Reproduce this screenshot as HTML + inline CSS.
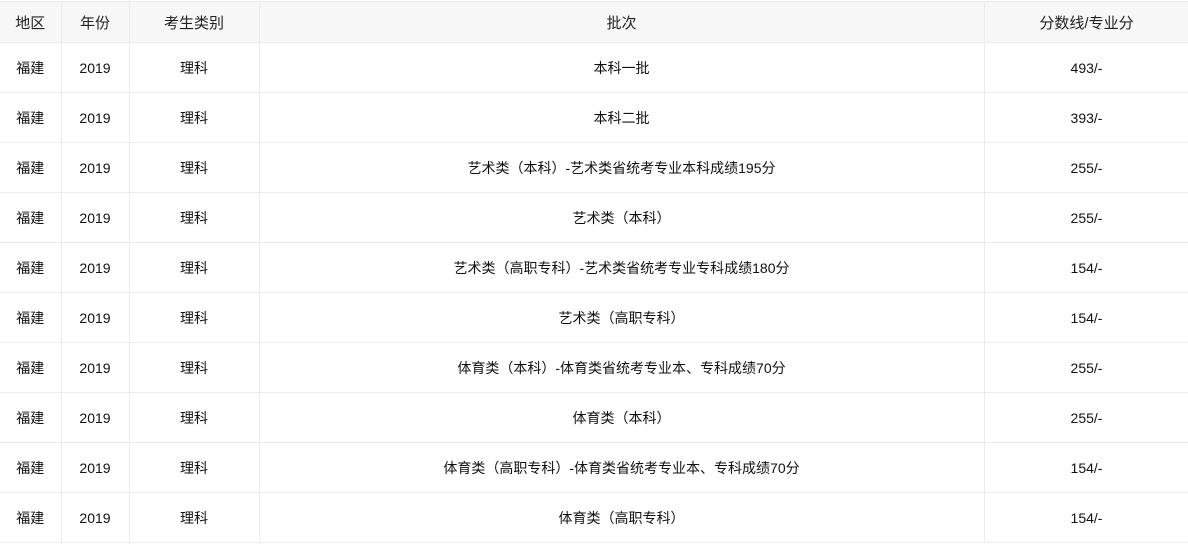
<!DOCTYPE html>
<html><head><meta charset="utf-8"><style>
body{margin:0;background:#fff;font-family:"Liberation Sans","Noto Sans CJK SC",sans-serif;color:#111;}
table{position:absolute;left:0;top:1px;border-collapse:collapse;table-layout:fixed;width:1189px;}
td,th{border:1px solid #ebebeb;text-align:center;padding:0;font-weight:normal;}
th{height:40px;font-size:15px;background:#f7f7f7;color:#222;}
td{height:49px;font-size:14px;}
tr>*:first-child{border-left:none}
.p{font-family:"Noto Sans CJK SC",sans-serif;}
</style></head><body>
<table>
<colgroup><col style="width:61px"><col style="width:68px"><col style="width:130px"><col style="width:725px"><col style="width:205px"></colgroup>
<tr><th>地区</th><th>年份</th><th>考生类别</th><th>批次</th><th>分数线/专业分</th></tr>
<tr><td>福建</td><td>2019</td><td>理科</td><td>本科一批</td><td>493/-</td></tr>
<tr><td>福建</td><td>2019</td><td>理科</td><td>本科二批</td><td>393/-</td></tr>
<tr><td>福建</td><td>2019</td><td>理科</td><td>艺术类<span class="p">（</span>本科<span class="p">）</span>-艺术类省统考专业本科成绩195分</td><td>255/-</td></tr>
<tr><td>福建</td><td>2019</td><td>理科</td><td>艺术类<span class="p">（</span>本科<span class="p">）</span></td><td>255/-</td></tr>
<tr><td>福建</td><td>2019</td><td>理科</td><td>艺术类<span class="p">（</span>高职专科<span class="p">）</span>-艺术类省统考专业专科成绩180分</td><td>154/-</td></tr>
<tr><td>福建</td><td>2019</td><td>理科</td><td>艺术类<span class="p">（</span>高职专科<span class="p">）</span></td><td>154/-</td></tr>
<tr><td>福建</td><td>2019</td><td>理科</td><td>体育类<span class="p">（</span>本科<span class="p">）</span>-体育类省统考专业本、专科成绩70分</td><td>255/-</td></tr>
<tr><td>福建</td><td>2019</td><td>理科</td><td>体育类<span class="p">（</span>本科<span class="p">）</span></td><td>255/-</td></tr>
<tr><td>福建</td><td>2019</td><td>理科</td><td>体育类<span class="p">（</span>高职专科<span class="p">）</span>-体育类省统考专业本、专科成绩70分</td><td>154/-</td></tr>
<tr><td>福建</td><td>2019</td><td>理科</td><td>体育类<span class="p">（</span>高职专科<span class="p">）</span></td><td>154/-</td></tr>
</table>
</body></html>
